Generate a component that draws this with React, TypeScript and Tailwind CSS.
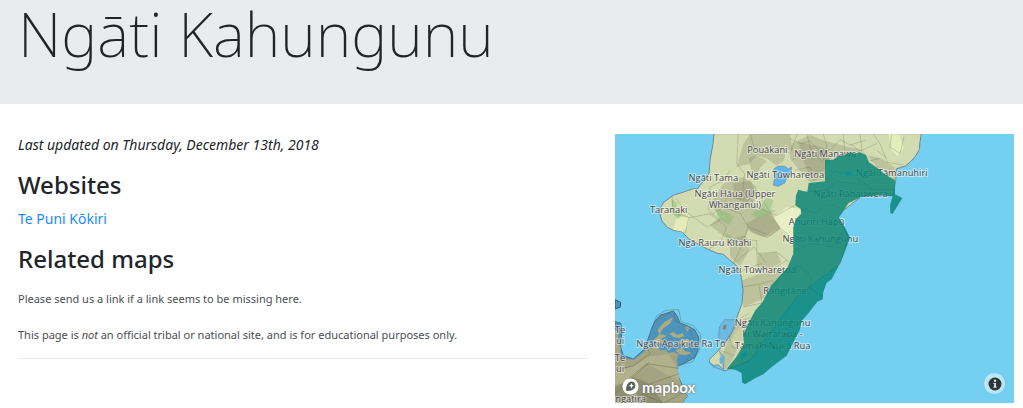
type Label = { x: number; y: number; lines: string[] };

const labels: Label[] = [
  { x: 472, y: 68, lines: ["Pouākani"] },
  { x: 646, y: 81, lines: ["Ngāti Manawa"] },
  { x: 310, y: 151, lines: ["Ngāti Tama"] },
  { x: 526, y: 144, lines: ["Ngāti Tūwharetoa"] },
  { x: 375, y: 199, lines: ["Ngāti Hāua (Upper", "Whanganui)"] },
  { x: 176, y: 249, lines: ["Taranaki"] },
  { x: 315, y: 346, lines: ["Ngā Rauru Kītahi"] },
  { x: 442, y: 429, lines: ["Ngāti Tūwharetoa"] },
  { x: 845, y: 138, lines: ["Ngāi Tāmanuhiri"] },
  { x: 722, y: 201, lines: ["Ngāti Pāhauwera"] },
  { x: 620, y: 283, lines: ["Ahuriri Hapū"] },
  { x: 631, y: 335, lines: ["Ngāti Kahungunu"] },
  { x: 525, y: 492, lines: ["Rangitāne"] },
  { x: 488, y: 587, lines: ["Ngāti Kahungunu", "ki Wairarapa -", "Tāmaki Nui ā Rua"] },
  { x: 213, y: 651, lines: ["Ngāti Apa ki te Rā Tō"] },
  { x: 30, y: 607, lines: ["Te", "ui"] },
  { x: 30, y: 692, lines: ["Te", "ui"] },
  { x: 62, y: 814, lines: ["ngatira"] },
];

const northIsland =
  "M312 10 L309 40 L300 90 L297 130 L284 150 L270 165 L262 176 L250 175 L224 184 L190 195 L162 215 L151 232 L149 248 L156 272 L172 291 L190 300 L216 304 L235 325 L262 340 L290 355 L322 369 L340 372 L358 388 L382 408 L394 440 L399 480 L396 520 L385 548 L376 576 L364 610 L345 638 L322 664 L299 686 L298 696 L310 705 L326 704 L345 722 L365 712 L420 690 L560 500 L690 400 L715 320 L685 262 L700 240 L752 200 L850 194 L857 150 L860 115 L886 107 L904 92 L916 78 L928 58 L930 34 L934 10 Z";

const southBay =
  "M15 574 L32 578 L36 600 L32 650 L40 676 L70 686 L106 654 L112 632 L124 598 L134 574 L150 555 L190 542 L202 558 L210 578 L232 586 L254 598 L266 620 L264 658 L254 682 L228 696 L202 708 L200 730 L214 758 L222 786 L232 796 L216 819 L15 819 Z";

const southLand =
  "M15 666 L34 684 L72 688 L112 656 L130 650 L140 640 L150 660 L166 658 L176 668 L192 664 L206 672 L200 690 L204 710 L198 728 L212 756 L222 786 L232 796 L216 819 L15 819 Z";

const territory =
  "M558 195 L565 178 L578 182 L592 184 L596 158 L645 153 L645 88 L670 88 L684 78 L705 75 L722 65 L735 71 L748 65 L768 74 L776 95 L802 113 L825 132 L855 150 L855 192 L877 203 L848 250 L841 249 L840 225 L848 198 L812 195 L755 199 L716 218 L696 247 L686 261 L706 294 L720 322 L706 360 L696 385 L683 412 L665 447 L650 457 L640 485 L638 507 L622 514 L594 550 L575 572 L569 600 L550 636 L530 676 L488 708 L460 732 L438 742 L405 762 L396 756 L395 728 L376 718 L350 715 L376 684 L402 642 L400 612 L420 570 L436 540 L458 515 L484 465 L532 412 L550 370 L550 290 L558 266 L574 250 L572 236 L556 225 Z";

const borders = [
  "M385 10 L380 100 L404 130 L398 180 L440 230 L500 255 L552 226",
  "M420 10 L432 50 L462 64 L500 48 L540 70 L562 10",
  "M540 25 L570 40 L600 32 L630 64 L662 58 L690 28 L720 44 L766 30",
  "M545 90 L582 70 L612 86 L640 60 L676 84 L710 62",
  "M556 120 L600 110 L610 150 L646 130 M590 10 L604 60 L640 98",
  "M640 10 L650 46 L640 90 M700 10 L704 60 M750 10 L756 64 L790 96",
  "M360 120 L340 150 L300 170 L296 240 L330 270 L292 290 L222 240",
  "M186 196 L190 250 L240 262 L300 250 L350 290 L330 340 L296 355",
  "M150 250 L200 242 L236 262 L226 308 M200 205 L222 240 L204 256",
  "M300 255 L340 230 L392 250 L414 290 L402 330 L440 330 L440 370",
  "M340 230 L350 200 L400 206 L440 180 L470 230 L510 292 L480 316 L414 290",
  "M402 330 L370 400 L432 350 L470 400 M510 292 L542 320 L550 350",
  "M440 370 L500 365 L536 394 M396 420 L452 400 L480 422 L530 390",
  "M396 470 L446 462 L456 518 L400 530 M448 462 L488 450 M380 570 L416 550",
  "M376 585 L404 590 L400 630 M330 660 L374 676 M356 610 L366 650 L390 660",
  "M790 10 L812 44 L832 96 L880 104 M845 10 L840 50 L870 70 L882 20",
  "M776 92 L810 84 L856 114 M800 60 L830 82 M720 40 L750 62 L800 40",
];

const shadedRegions = [
  "M400 40 L420 12 L540 10 L548 60 L530 60 L520 92 L500 106 L470 84 L440 74 L420 100 L380 110 Z",
  "M545 40 L600 14 L640 30 L700 46 L760 60 L710 74 L645 90 L645 150 L598 155 L560 110 L540 84 Z",
  "M340 160 L400 140 L440 170 L430 230 L470 240 L510 292 L460 320 L414 300 L400 336 L344 320 L300 284 L330 260 L300 220 Z",
  "M408 280 L440 262 L480 246 L512 296 L470 324 L424 306 Z",
  "M360 330 L404 314 L424 344 L408 376 L390 408 L360 380 Z",
  "M440 372 L500 366 L514 396 L470 420 L440 410 Z",
  "M396 450 L450 430 L530 420 L470 500 L400 530 Z",
  "M376 576 L420 560 L400 618 L366 690 L345 720 L330 690 Z",
];

function Territories() {
  return (
    <svg
      viewBox="15 11 1197 807"
      className="block w-full bg-[#75cff0]"
      role="img"
      aria-label="Map of Ngāti Kahungunu"
    >
      <path d={northIsland} fill="#d3dbb1" stroke="#718795" strokeWidth="3" />
      <path d="M190 298 L200 264 L238 254 L235 286 L218 304 Z" fill="#e4ecba" />
      <path d="M490 262 L530 230 L574 236 L550 290 L548 330 L514 300 Z" fill="#e8efc5" />
      <path d="M835 10 L870 14 L882 54 L862 78 L845 60 Z" fill="#e4ecba" />
      <path d="M380 600 L408 588 L400 620 L376 650 L356 642 Z" fill="#e4ecba" />
      <g fill="#77775a" fillOpacity="0.25">
        {shadedRegions.map((d) => (
          <path key={d} d={d} />
        ))}
        <path d="M565 34 L640 52 L660 90 L644 120 L600 145 L580 90 Z" />
        <path d="M415 84 L440 74 L470 92 L450 112 L444 140 L424 118 Z" />
        <path d="M370 160 L424 150 L436 190 L410 218 L372 204 Z" />
        <path d="M775 74 L805 82 L857 118 L855 150 L802 113 Z" />
      </g>
      <g fill="#82bd70" fillOpacity="0.45">
        <path d="M184 206 L202 218 L198 244 L218 250 L205 266 L188 250 Z" />
        <path d="M326 236 L350 246 L372 260 L358 284 L330 270 L320 254 Z" />
        <path d="M424 250 L450 232 L468 202 L490 210 L482 236 L496 242 L466 258 L440 262 Z" />
        <path d="M345 310 L362 316 L390 340 L380 350 L350 328 Z" />
      </g>
      <g fill="none" stroke="#65684c" strokeOpacity="0.4" strokeWidth="2" strokeLinejoin="round">
        {borders.map((d) => (
          <path key={d} d={d} />
        ))}
      </g>
      <path
        d="M492 116 L504 108 L522 107 L536 116 L544 110 L544 124 L532 138 L524 158 L504 168 L490 164 L494 142 Z"
        fill="#61b5e5"
        stroke="#5d8da8"
        strokeWidth="2"
      />
      <path
        d="M298 696 L310 710 L345 722 M376 568 L344 568 L328 590 L326 622 L344 638 L376 590 M326 660 L342 680 L340 720"
        fill="#66a9d4"
        fillOpacity="0.55"
        stroke="#5d8da8"
        strokeWidth="2"
      />
      <path d="M340 586 L350 582 L346 598 L338 596 Z" fill="#7d8570" />
      <path d="M328 684 L342 676 L340 698 L330 700 Z" fill="#61b5e5" />

      <path d={southBay} fill="#4d94bb" stroke="#46728d" strokeWidth="3" />
      <path d={southLand} fill="#a5a482" />
      <path d="M15 724 L70 706 L120 678 L176 672 L202 712 L208 752 L110 700 L60 754 L15 764 Z" fill="#b1b18b" />
      <path d="M15 770 L70 740 L120 760 L160 819 L15 819 Z" fill="#8e8f70" />
      <path d="M15 598 L26 604 L24 634 L32 652 L30 678 L15 672 Z" fill="#a7a681" />
      <path d="M15 508 L32 516 L31 530 L15 536 Z" fill="#4d94bb" stroke="#35566c" strokeWidth="3" />
      <g fill="#acaa83">
        <path d="M142 600 L162 576 L190 560 L180 580 L160 594 L148 612 Z" />
        <path d="M130 630 L150 610 L170 616 L154 626 L168 638 L144 640 Z" />
        <path d="M178 610 L190 604 L202 614 L218 608 L222 618 L206 624 L190 620 Z" />
        <path d="M202 634 L220 626 L250 634 L230 640 L244 650 L218 646 Z" />
        <path d="M196 660 L216 652 L224 662 L248 668 L226 674 L208 672 Z" />
        <path d="M222 588 L240 592 L232 604 Z" />
      </g>
      <g fill="none" stroke="#4f7183" strokeOpacity="0.7" strokeWidth="2">
        <path d="M124 598 L140 556 L168 540 L206 538 L214 574 L250 586 L272 612 L268 660 L248 694 L206 706" />
        <path d="M190 542 L196 570 L242 602 L256 650 L228 690 M134 574 L180 548 L204 578" />
      </g>
      <g fill="none" stroke="#5f604a" strokeOpacity="0.6" strokeWidth="2">
        <path d="M15 720 L70 706 L120 670 L112 654 M40 760 L110 700 L206 714 M70 740 L118 696" />
        <path d="M120 760 L208 730 M96 790 L160 819 L222 786 M15 790 L70 740" />
      </g>

      <g
        fill="#464646"
        stroke="#ffffff"
        strokeOpacity="0.5"
        strokeWidth="6"
        strokeLinejoin="round"
        paintOrder="stroke"
        textAnchor="middle"
        fontSize="28"
        className="font-['Open_Sans','Noto_Sans',sans-serif] font-medium"
      >
        {labels.map((label) => (
          <text key={`${label.x}-${label.y}`} x={label.x} y={label.y}>
            {label.lines.map((line, i) => (
              <tspan key={line} x={label.x} dy={i === 0 ? 0 : 34}>
                {line}
              </tspan>
            ))}
          </text>
        ))}
      </g>

      <path d={territory} fill="#088576" fillOpacity="0.84" />
      <g fill="none" stroke="#08685f" strokeOpacity="0.3" strokeWidth="2">
        <path d="M596 184 L650 180 L680 154 L740 160 L775 120 L770 90" />
        <path d="M650 152 L674 122 L735 136 L786 178 L850 178" />
        <path d="M572 236 L620 248 L652 220 L690 232 M550 365 L604 338 L668 350 L704 300" />
        <path d="M520 426 L570 405 L604 442 L596 470 L638 500 M440 620 L492 604 L560 620" />
        <path d="M420 590 L450 640 L500 656 L530 676" />
      </g>
      <path d="M708 126 L722 122 L724 132 L712 136 Z" fill="#098f9b" />
      <path d="M390 678 L406 662 L412 672 L394 688 Z" fill="#098f9b" />
    </svg>
  );
}

function MapboxLogo() {
  return (
    <a
      href="#mapbox"
      aria-label="Mapbox"
      className="absolute bottom-2 left-[7px] flex items-center gap-[3px] text-white"
    >
      <svg viewBox="0 0 18 18" className="size-[17px]" aria-hidden="true">
        <circle cx="9" cy="9" r="8.5" fill="#fff" />
        <path
          d="M10 3.800a4.300 4.300 0 0 1 3.100 7.300C11 13.300 6.500 14.100 4.400 13.600C3.900 11.500 4.700 7.200 6.900 5.100A4.300 4.300 0 0 1 10 3.800Z"
          fill="#5b6257"
        />
        <path d="m10 5.400.9 1.900 1.900.9-1.900.9-.9 1.900-.9-1.900-1.900-.9 1.900-.9Z" fill="#fff" />
      </svg>
      <span className="font-['Lato',sans-serif] text-[15px] leading-4 font-bold [text-shadow:0_0_1px_#666,0_0_2px_#666]">
        mapbox
      </span>
    </a>
  );
}

export default function App() {
  return (
    <div className="bg-white font-['Noto_Sans',sans-serif] text-[#212529]">
      <header className="bg-[#e8ecef] px-[18px] pb-9">
        <h1 className="text-[61px] leading-[68px] font-extralight">Ngāti Kahungunu</h1>
      </header>

      <main className="grid grid-cols-[570fr_399fr] gap-[27px] pt-[30px] pr-[9px] pl-[18px]">
        <section>
          <p className="text-sm leading-[22px] italic">
            Last updated on Thursday, December 13th, 2018
          </p>
          <h2 className="mt-[14px] text-2xl leading-[30px] font-medium">Websites</h2>
          <p className="mt-2 text-sm leading-[22px]">
            <a href="#te-puni-kokiri" className="text-[#2388ff]">
              Te Puni Kōkiri
            </a>
          </p>
          <h2 className="mt-[14px] text-2xl leading-[30px] font-medium">Related maps</h2>
          <div className="mt-4 text-[11px] leading-[18px] text-[#4a4e51]">
            <p>Please send us a link if a link seems to be missing here.</p>
            <p className="mt-[18px]">
              This page is <em>not</em> an official tribal or national site, and is for educational
              purposes only.
            </p>
          </div>
          <hr className="mt-[14px] border-[#e9e9e9]" />
        </section>

        <section className="relative self-start">
          <Territories />
          <MapboxLogo />
          <button
            type="button"
            aria-label="Map information"
            className="absolute right-[9px] bottom-[9px] grid size-[21px] place-items-center rounded-full bg-white/50"
          >
            <svg viewBox="0 0 14 14" className="size-[14px]" aria-hidden="true">
              <circle cx="7" cy="7" r="6.5" fill="#333" />
              <circle cx="7" cy="3.7" r="1.2" fill="#c6eaf7" />
              <path d="M5.4 5.9H8v3.9h.8v1H5.3v-1h.8V6.9h-.7Z" fill="#c6eaf7" />
            </svg>
          </button>
        </section>
      </main>
    </div>
  );
}
